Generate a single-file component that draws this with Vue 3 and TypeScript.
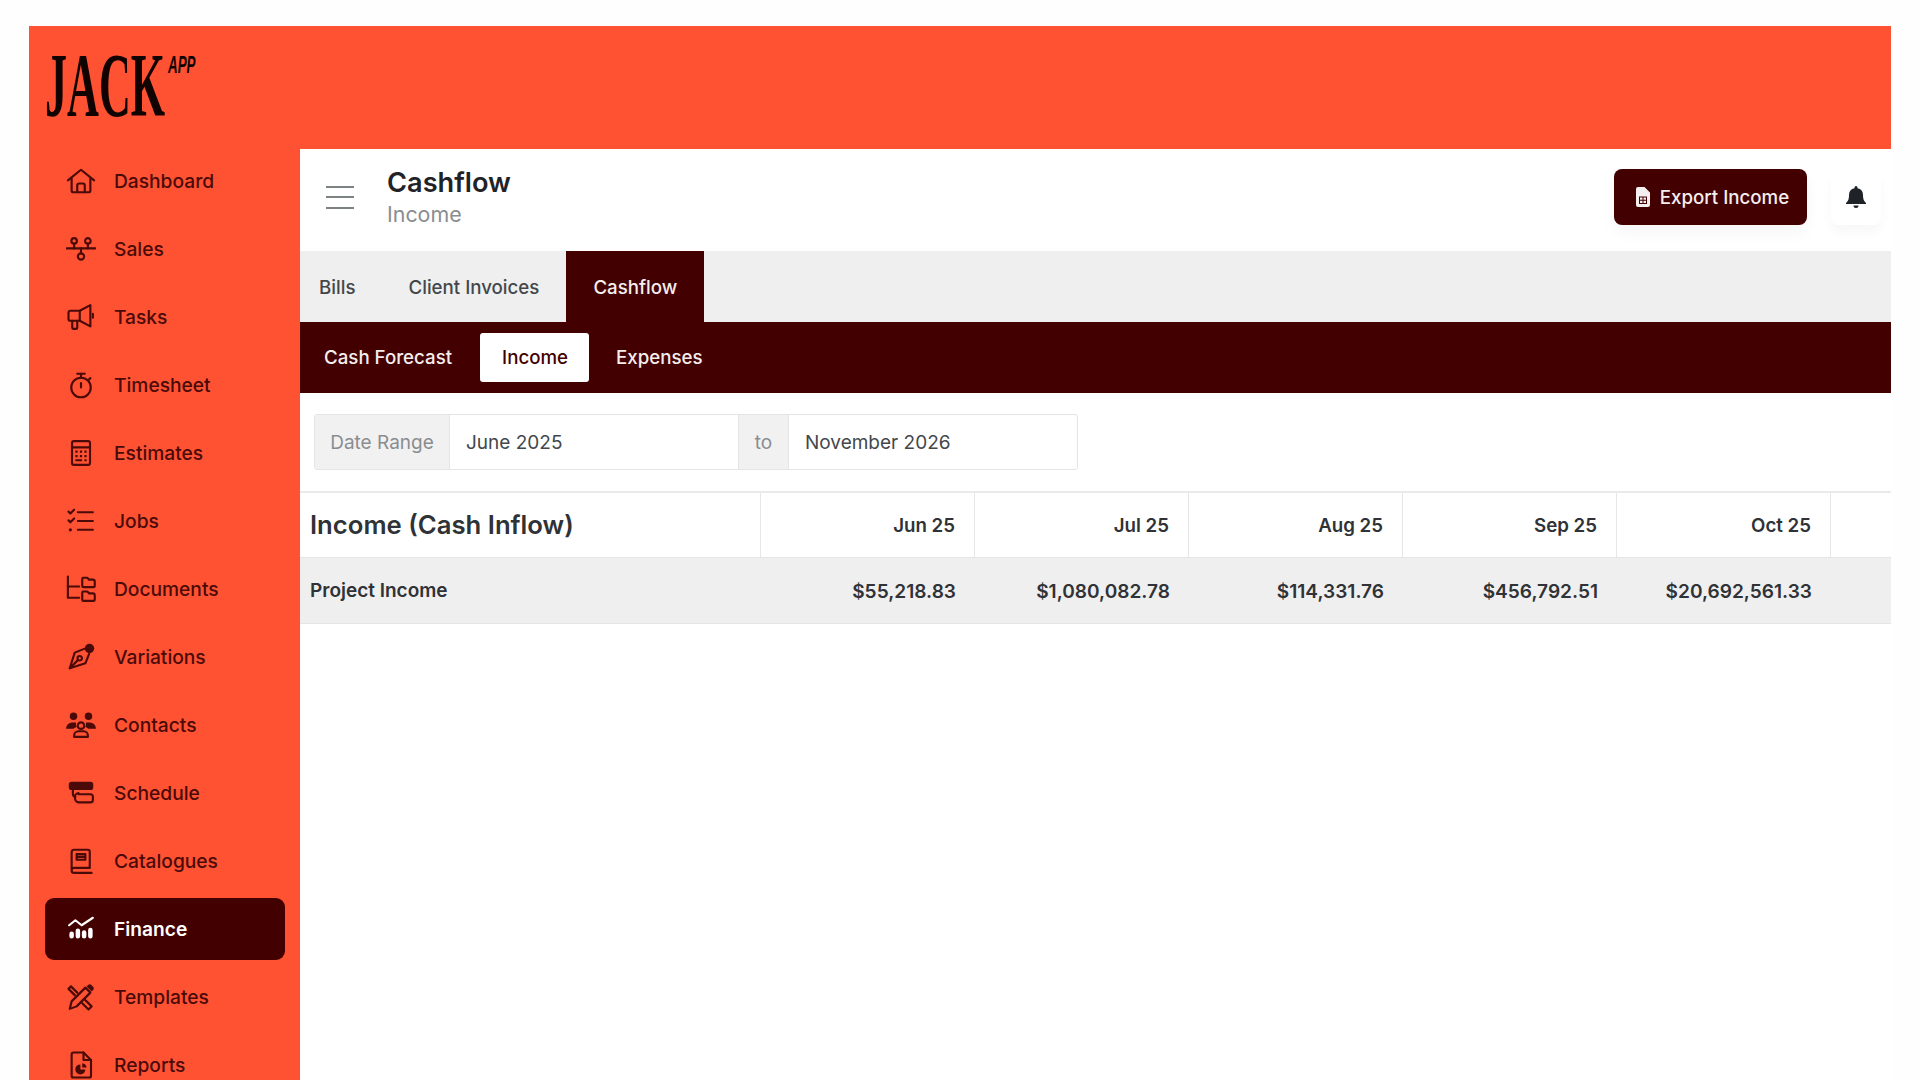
<script setup lang="ts">
type NavItem = { label: string; lines: string[]; fills?: string[]; active?: boolean };

const ring = (cx: number, cy: number, r: number) =>
  `M${cx - r} ${cy}a${r} ${r} 0 1 0 ${2 * r} 0a${r} ${r} 0 1 0 ${-2 * r} 0`;

const navItems: NavItem[] = [
  {
    label: "Dashboard",
    lines: [
      "M1.500 11.500 12 3l10.500 8.500",
      "M4.500 10v9.500a1.500 1.500 0 0 0 1.500 1.500h12a1.500 1.500 0 0 0 1.500-1.500V10",
      "M9 21v-5.500a1.500 1.500 0 0 1 1.500-1.500h3a1.500 1.500 0 0 1 1.500 1.500V21",
    ],
  },
  {
    label: "Sales",
    lines: [
      ring(6.5, 5.5, 2.2),
      ring(17.5, 5.5, 2.2),
      ring(12, 18, 2.5),
      "M.5 11.500h23",
      "M6.500 7.700v3.800M17.500 7.700v3.800M12 11.500v4",
    ],
  },
  {
    label: "Tasks",
    lines: [
      "M3.500 7H11l8.500-4.500v17L11 15H3.500A1.500 1.500 0 0 1 2 13.500v-5A1.500 1.500 0 0 1 3.500 7z",
      "M11 7v8",
      "M5 15v5.500a1 1 0 0 0 1 1h2a1 1 0 0 0 1-1V15",
      "M21.500 9.500v3",
    ],
  },
  {
    label: "Timesheet",
    lines: [ring(12, 14, 7.8), "M9 3h6", "M12 3v3", "M12 10.500v3.500", "M18 8l1.500-1.500"],
  },
  {
    label: "Estimates",
    lines: [
      "M6.300 2.500h11.400a1.500 1.500 0 0 1 1.500 1.500v16a1.500 1.500 0 0 1-1.500 1.500H6.300A1.500 1.500 0 0 1 4.800 20V4a1.500 1.500 0 0 1 1.500-1.500z",
      "M4.800 7.500h14.400",
    ],
    fills: [
      "M7.500 10h1.800v1.800H7.500zM11.100 10h1.800v1.800h-1.800zM14.700 10h1.800v1.800h-1.800zM7.500 13.500h1.800v1.800H7.500zM11.100 13.500h1.800v1.800h-1.800zM14.700 13.500h1.800v1.800h-1.800zM7.500 17h5.400v1.500H7.500zM14.700 17h1.800v1.500h-1.800z",
    ],
  },
  {
    label: "Jobs",
    lines: [
      "M2 4.500l1.500 1.500L6.500 3",
      "M2 11.500l1.500 1.500 3-3",
      "M9.500 5h12M9.500 12h12M9.500 19h12",
    ],
    fills: [ring(3.5, 19, 1.3)],
  },
  {
    label: "Documents",
    lines: [
      "M1.500 2v17h9",
      "M1.500 10h9",
      "M13.500 3h3.500l1.500 1.500h3a1.500 1.500 0 0 1 1.500 1.500v3.500a1 1 0 0 1-1 1h-8a1 1 0 0 1-1-1V4a1 1 0 0 1 1-1z",
      "M13.500 14h3.500l1.500 1.500h3a1.500 1.500 0 0 1 1.500 1.500v3.500a1 1 0 0 1-1 1h-8a1 1 0 0 1-1-1V15a1 1 0 0 1 1-1z",
    ],
  },
  {
    label: "Variations",
    lines: [
      "M14.500 5.500 7 8.500 3 21l12.500-4 3-7.500",
      "M3 21l6.500-6.500",
      ring(11, 13, 1.8),
    ],
    fills: [ring(18.8, 5.2, 3.8)],
  },
  {
    label: "Contacts",
    lines: [
      ring(12, 12.5, 2.6),
      "M6.500 21.500v-1a3.500 3.500 0 0 1 3.500-3.500h4a3.500 3.500 0 0 1 3.500 3.500v1z",
    ],
    fills: [
      ring(6, 5, 3),
      ring(18, 5, 3),
      "M0 15a5 5 0 0 1 5-5h3a6 6 0 0 0 .5 3.500A6 6 0 0 0 6 15z",
      "M24 15a5 5 0 0 0-5-5h-3a6 6 0 0 1-.5 3.500A6 6 0 0 1 18 15z",
    ],
  },
  {
    label: "Schedule",
    lines: [
      "M5.500 9.500v3a3 3 0 0 0 2 2.800",
      "M10 13h9.500a2 2 0 0 1 2 2v2.500a2 2 0 0 1-2 2H10.500a3.300 3.300 0 0 1-3.300-3.300 3.200 3.200 0 0 1 2.800-4.200z",
    ],
    fills: ["M4.500 3h15a2.300 2.300 0 0 1 2.300 2.300v2a2.300 2.300 0 0 1-2.300 2.300h-15a2.300 2.300 0 0 1-2.300-2.300v-2A2.300 2.300 0 0 1 4.500 3z"],
  },
  {
    label: "Catalogues",
    lines: [
      "M4.500 19V5a2 2 0 0 1 2-2h11a1.500 1.500 0 0 1 1.500 1.500v13H6.500a2 2 0 0 0 0 4h14",
      "M8.500 6.500h7v4.500h-7zM8.500 8.700h7",
    ],
  },
  {
    label: "Finance",
    active: true,
    lines: ["M2.500 9 7.500 5l5 4 9-6"],
    fills: [
      "M4.500 14a1.800 1.800 0 0 1 1.800 1.800v2a1.800 1.800 0 0 1-3.600 0v-2A1.800 1.800 0 0 1 4.500 14z",
      "M9.500 11.500a1.800 1.800 0 0 1 1.800 1.800v4.500a1.800 1.800 0 0 1-3.600 0v-4.500a1.800 1.800 0 0 1 1.800-1.800z",
      "M14.500 13a1.800 1.800 0 0 1 1.800 1.800v3a1.800 1.800 0 0 1-3.600 0v-3a1.800 1.800 0 0 1 1.800-1.800z",
      "M19.500 11a1.800 1.800 0 0 1 1.800 1.800v5a1.800 1.800 0 0 1-3.600 0v-5a1.800 1.800 0 0 1 1.800-1.800z",
    ],
  },
  {
    label: "Templates",
    lines: [
      "M3 21.500 4.500 15.500 15.500 4.500l4 4-11 11z",
      "M9 8.500 4 3.500 2 5.500l5 5",
      "M15 14l5.500 5.500-2.500 2.500-5-5",
    ],
    fills: ["M16.500 3.500l1-1a2.100 2.100 0 0 1 3 0l1 1a2.100 2.100 0 0 1 0 3l-1 1z"],
  },
  {
    label: "Reports",
    lines: [
      "M6 2h8l6 6v12.500a1.500 1.500 0 0 1-1.500 1.500h-12.500a1.500 1.500 0 0 1-1.500-1.500V3.500A1.500 1.500 0 0 1 6 2z",
      "M14 2V8h6",
    ],
    fills: ["M11.500 11.500v4H15.500a4 4 0 1 1-4-4z", "M13 10.500a4 4 0 0 1 3.500 3.500H13z"],
  },
];

const mainTabs = ["Bills", "Client Invoices", "Cashflow"];
const subTabs = ["Cash Forecast", "Income", "Expenses"];

const months = ["Jun 25", "Jul 25", "Aug 25", "Sep 25", "Oct 25"];
const projectIncome = ["$55,218.83", "$1,080,082.78", "$114,331.76", "$456,792.51", "$20,692,561.33"];
</script>

<template>
  <div class="frame">
    <div class="topbar">
      <div class="logo">
        <span class="logo__jack">JACK</span>
        <span class="logo__app">APP</span>
      </div>
    </div>

    <div class="body">
      <aside class="sidebar">
        <a
          v-for="item in navItems"
          :key="item.label"
          class="nav-item"
          :class="{ 'nav-item--active': item.active }"
        >
          <svg class="nav-item__icon" viewBox="0 0 24 24" fill="none">
            <path v-for="d in item.lines" :key="d" :d="d" class="icon-line" />
            <path v-for="d in item.fills" :key="d" :d="d" class="icon-fill" />
          </svg>
          <span>{{ item.label }}</span>
        </a>
      </aside>

      <main class="main">
        <header class="page-head">
          <div class="burger">
            <span></span>
            <span></span>
            <span></span>
          </div>
          <div class="page-head__titles">
            <h1>Cashflow</h1>
            <p>Income</p>
          </div>
          <button class="export">
            <svg width="18" height="22" viewBox="0 0 18 22">
              <path
                fill="#f4eeee"
                fill-rule="evenodd"
                d="M4 1h6.500L16 6.500V19a2 2 0 0 1-2 2H4a2 2 0 0 1-2-2V3a2 2 0 0 1 2-2zM5 10.500v7.500h8v-7.500zm1 1h2.500v2.200H6zm3.500 0H12v2.200H9.500zM6 14.700h2.500v2.300H6zm3.500 0H12v2.300H9.500z"
              />
            </svg>
            Export Income
          </button>
          <div class="bell">
            <svg width="22" height="24" viewBox="0 0 22 24">
              <path
                fill="#1f2327"
                d="M11 1a1.500 1.500 0 0 1 1.500 1.500v.7A7 7 0 0 1 18 10c0 4.500 1 6 3 8v1H1v-1c2-2 3-3.500 3-8a7 7 0 0 1 5.500-6.800v-.7A1.500 1.500 0 0 1 11 1zM8.500 20.500h5a2.500 2.500 0 0 1-5 0z"
              />
            </svg>
          </div>
        </header>

        <nav class="tabs">
          <a
            v-for="tab in mainTabs"
            :key="tab"
            class="tabs__item"
            :class="{ 'tabs__item--active': tab === 'Cashflow' }"
          >{{ tab }}</a>
        </nav>

        <nav class="subtabs">
          <a
            v-for="tab in subTabs"
            :key="tab"
            class="subtabs__item"
            :class="{ 'subtabs__item--active': tab === 'Income' }"
          >{{ tab }}</a>
        </nav>

        <div class="range">
          <span class="range__addon range__addon--label">Date Range</span>
          <span class="range__input">June 2025</span>
          <span class="range__addon range__addon--to">to</span>
          <span class="range__input range__input--last">November 2026</span>
        </div>

        <div class="table">
          <div class="table__row table__row--head">
            <div class="cell cell--title">Income (Cash Inflow)</div>
            <div v-for="month in months" :key="month" class="cell cell--month">{{ month }}</div>
            <div class="cell cell--rest"></div>
          </div>
          <div class="table__row table__row--body">
            <div class="cell cell--name">Project Income</div>
            <div v-for="amount in projectIncome" :key="amount" class="cell cell--amount">{{ amount }}</div>
            <div class="cell cell--rest"></div>
          </div>
        </div>
      </main>
    </div>
  </div>
</template>

<style>
html,
body {
  margin: 0;
  height: 100%;
  overflow: hidden;
  background: #fefefe;
}
</style>

<style scoped>
.frame {
  margin: 26px 29px 0;
  height: 1054px;
  display: flex;
  flex-direction: column;
  background: #ff5233;
  font-family: Inter, "Liberation Sans", sans-serif;
  overflow: hidden;
}

.topbar {
  height: 123px;
  flex: none;
  padding: 30px 0 0 16px;
  box-sizing: border-box;
}

.logo {
  display: flex;
  align-items: flex-start;
  color: #120303;
  height: 60px;
}

.logo__jack {
  font-family: "Liberation Serif", serif;
  font-weight: 700;
  font-size: 90px;
  line-height: 60px;
  display: block;
  width: 123px;
  transform: scaleX(0.49);
  transform-origin: left center;
}

.logo__app {
  font-family: "Liberation Sans", sans-serif;
  font-weight: 700;
  font-style: italic;
  font-size: 23px;
  line-height: 24px;
  display: block;
  transform: scaleX(0.58);
  transform-origin: left center;
  margin-top: -3px;
}

.body {
  flex: 1;
  display: flex;
  min-height: 0;
}

.sidebar {
  width: 271px;
  flex: none;
  box-sizing: border-box;
  padding: 1px 15px 0 16px;
  display: flex;
  flex-direction: column;
  gap: 6px;
}

.nav-item {
  height: 62px;
  flex: none;
  display: flex;
  align-items: center;
  gap: 18px;
  padding-left: 21px;
  border-radius: 9px;
  color: #4a0a08;
  font-size: 19.2px;
  font-weight: 500;
}

.nav-item__icon {
  width: 30px;
  height: 30px;
  flex: none;
}

.icon-line {
  stroke: currentColor;
  stroke-width: 1.7;
  stroke-linecap: round;
  stroke-linejoin: round;
}

.icon-fill {
  fill: currentColor;
}

.nav-item--active {
  background: #430000;
  color: #fff;
  font-weight: 600;
}

.main {
  flex: 1;
  min-width: 0;
  background: #fff;
}

.page-head {
  height: 102px;
  box-sizing: border-box;
  display: flex;
  align-items: center;
  padding: 0 10px 6px 26px;
}

.burger {
  width: 28px;
  display: flex;
  flex-direction: column;
  gap: 8.500px;
  margin-right: 33px;
}

.burger span {
  height: 2px;
  background: #7d8285;
}

.page-head__titles {
  flex: 1;
}

.page-head__titles h1 {
  margin: 0;
  font-size: 27.2px;
  line-height: 34px;
  font-weight: 600;
  color: #1f2327;
}

.page-head__titles p {
  margin: 0;
  font-size: 21.4px;
  line-height: 29px;
  color: #8a8d90;
}

.export {
  width: 193px;
  height: 56px;
  border: 0;
  border-radius: 8px;
  background: #430000;
  color: #f4eeee;
  font: 500 18.7px Inter, "Liberation Sans", sans-serif;
  display: flex;
  align-items: center;
  justify-content: center;
  gap: 8px;
  padding-left: 8px;
  box-shadow: 0 8px 16px rgba(0, 0, 0, 0.04);
}

.bell {
  width: 50px;
  height: 56px;
  margin-left: 24px;
  display: flex;
  align-items: center;
  justify-content: center;
  border-radius: 8px;
  box-shadow: 0 8px 12px rgba(0, 0, 0, 0.03);
}

.tabs {
  height: 71px;
  display: flex;
  background: #efefef;
}

.tabs__item {
  display: flex;
  align-items: center;
  padding: 1px 27px 0;
  font-size: 18.7px;
  font-weight: 500;
  color: #43474b;
}

.tabs__item:first-child {
  padding: 1px 26px 0 19px;
}

.tabs__item--active {
  background: #430000;
  color: #f4eeee;
}

.subtabs {
  height: 71px;
  display: flex;
  align-items: center;
  background: #430000;
}

.subtabs__item {
  height: 49px;
  display: flex;
  align-items: center;
  padding: 0 27px;
  font-size: 18.7px;
  font-weight: 500;
  color: #f4eeee;
  border-radius: 3px;
}

.subtabs__item:first-child {
  padding: 0 27px 0 24px;
}

.subtabs__item--active {
  background: #fff;
  color: #430000;
  padding: 0 21px 0 22px;
  margin-left: 1px;
}

.range {
  margin: 21px 0 0 14px;
  width: 764px;
  height: 56px;
  display: flex;
  box-sizing: border-box;
  border: 1px solid #e4e5e6;
  border-radius: 3px;
  font-size: 19px;
  line-height: 56px;
  color: #43474b;
}

.range__addon {
  background: #f1f1f1;
  color: #8a8d90;
  text-align: center;
}

.range__addon--label {
  width: 135px;
  border-right: 1px solid #e4e5e6;
  box-sizing: border-box;
}

.range__addon--to {
  width: 51px;
  border: solid #e4e5e6;
  border-width: 0 1px;
  box-sizing: border-box;
}

.range__input {
  width: 288px;
  padding-left: 16px;
  box-sizing: border-box;
}

.range__input--last {
  flex: 1;
}

.table {
  margin-top: 21px;
  border-top: 2px solid #e9eaea;
}

.table__row {
  display: grid;
  grid-template-columns: 461px repeat(5, 214px) 1fr;
}

.table__row--head {
  height: 64px;
  border-bottom: 1px solid #e4e5e6;
}

.table__row--body {
  height: 65px;
  background: #efefef;
  border-bottom: 1px solid #e4e5e6;
}

.cell {
  display: flex;
  align-items: center;
  color: #2f3236;
}

.table__row--head .cell {
  border-right: 1px solid #e6e7e8;
}

.table__row--head .cell--rest {
  border-right: 0;
}

.cell--title {
  padding-left: 10px;
  padding-bottom: 2px;
  font-size: 25.7px;
  font-weight: 600;
}

.cell--name {
  padding-left: 10px;
  font-size: 19px;
  font-weight: 600;
}

.cell--month {
  justify-content: flex-end;
  padding-right: 19px;
  font-size: 18.7px;
  font-weight: 600;
}

.cell--amount {
  justify-content: flex-end;
  padding-right: 19px;
  font-size: 19.1px;
  font-weight: 600;
}
</style>
